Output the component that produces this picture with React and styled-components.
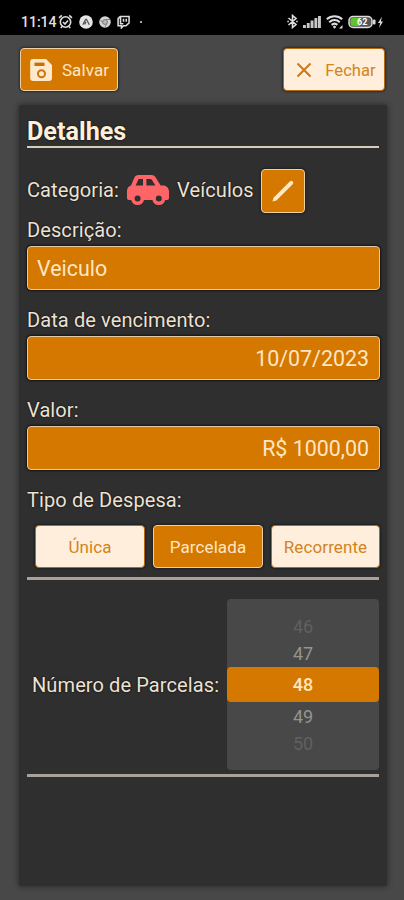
import React from "react";
import styled, { createGlobalStyle } from "styled-components";

const GlobalStyle = createGlobalStyle`
  * { box-sizing: border-box; }
  body {
    margin: 0;
    background: #484848;
    font-family: Roboto, "Liberation Sans", sans-serif;
  }
`;

const Screen = styled.div`
  display: flex;
  flex-direction: column;
  width: 404px;
  height: 900px;
  background: #484848;
  overflow: hidden;
`;

const StatusBar = styled.div`
  display: flex;
  justify-content: space-between;
  align-items: center;
  height: 35px;
  padding: 8px 20px 0 21px;
  background: #000;
  color: #e2e2e2;
`;

const StatusGroup = styled.div`
  display: flex;
  align-items: center;
  gap: ${props => props.$gap};
`;

const Clock = styled.span`
  font-size: 14px;
  font-weight: 500;
  margin-right: -5px;
`;

const Header = styled.div`
  display: flex;
  justify-content: space-between;
  padding: 13px 19px 0 20px;
  height: 70px;
`;

const Button = styled.button`
  display: flex;
  align-items: center;
  justify-content: center;
  gap: ${props => props.$gap || "0"};
  width: ${props => props.$width};
  height: ${props => props.$height || "43px"};
  padding: ${props => props.$padding || "0"};
  border: 1.5px solid ${props => (props.$light ? "#b56a0c" : "#f0cfa2")};
  border-radius: 4px;
  background: ${props => (props.$light ? "#ffeedb" : "#d47800")};
  color: ${props => (props.$light ? "#d08422" : "#ffe6c4")};
  font-family: inherit;
  font-size: ${props => props.$size || "17px"};
  letter-spacing: ${props => props.$spacing || "0.1px"};
  box-shadow: 0 0 2px 1px rgba(10, 20, 30, 0.55);
`;

const Panel = styled.div`
  flex: none;
  display: flex;
  flex-direction: column;
  width: 368px;
  height: 781px;
  margin-left: 19px;
  padding: 0 8px;
  background: #2f2f2f;
  border-radius: 3px;
  box-shadow: 0 0 5px 1px rgba(30, 30, 30, 0.6);
`;

const Title = styled.h1`
  margin: 0;
  height: 43px;
  padding-top: 12px;
  border-bottom: 2px solid #d9cbb9;
  color: #ffefd9;
  font-size: 25.2px;
  line-height: 29px;
  font-weight: 700;
  text-shadow: 0 0 2px #000;
`;

const CategoryRow = styled.div`
  display: flex;
  align-items: center;
  height: 46px;
  margin-top: 19px;
`;

const Label = styled.span`
  color: #eee2d2;
  font-size: 20px;
  line-height: 24px;
  letter-spacing: 0.1px;
  text-shadow: 0 0 2px #000;
  white-space: nowrap;
`;

const CarIcon = styled.svg`
  margin: 0 7px;
`;

const EditButton = styled(Button)`
  margin: 2px 0 0 7px;
`;

const Field = styled.label`
  display: flex;
  flex-direction: column;
  gap: 4px;
  height: 90px;
  padding-top: 5px;
`;

const Input = styled.input`
  width: 353px;
  height: 44px;
  padding: 1px 10px 0 9px;
  border: 1.5px solid #e6c8a2;
  border-radius: 4px;
  outline: none;
  background: #d47800;
  color: #ffe6c4;
  font-family: inherit;
  font-size: 21.4px;
  text-align: ${props => props.$align || "left"};
  box-shadow: 0 0 2px 1px rgba(0, 0, 0, 0.6);
`;

const TypeSection = styled.div`
  height: 97px;
  padding-top: 5px;
  border-bottom: 3px solid #aaa299;
`;

const TypeRow = styled.div`
  display: flex;
  gap: 8px;
  width: 353px;
  padding: 13px 0 0 8px;
`;

const Installments = styled.div`
  display: flex;
  align-items: center;
  justify-content: space-between;
  height: 197px;
  padding: 18px 0 3px 5px;
  border-bottom: 3px solid #aaa299;
`;

const Picker = styled.div`
  display: flex;
  flex-direction: column;
  align-items: center;
  width: 152px;
  height: 171px;
  padding-top: 14px;
  border-radius: 4px;
  background: #484848;
`;

const PickerItem = styled.div`
  height: 27px;
  line-height: 27px;
  font-size: 18px;
  color: ${props => (props.$far ? "#606060" : "#969490")};
`;

const PickerSelected = styled.div`
  width: 152px;
  height: 35px;
  margin-bottom: 1px;
  line-height: 36px;
  border-radius: 4px;
  background: #d47800;
  color: #ffe6c4;
  font-size: 18px;
  font-weight: 500;
  text-align: center;
`;

const types = [
  { name: "Única", width: "110px" },
  { name: "Parcelada", width: "110px" },
  { name: "Recorrente", width: "109px" },
];

function StatusIcons() {
  return (
    <StatusGroup $gap="6px">
      <Clock>11:14</Clock>
      <svg width="15" height="15" viewBox="0 0 15 15" fill="none" stroke="#ddd" strokeWidth="1.6">
        <circle cx="7.5" cy="8" r="5.2" />
        <path d="M1 3.8 3.8 1.3M14 3.8 11.2 1.3M5 8l2 2 3-3.5M4 12.5 2.8 14M11 12.5l1.2 1.5" />
      </svg>
      <svg width="14" height="14" viewBox="0 0 14 14">
        <circle cx="7" cy="7" r="6.8" fill="#e6e6e6" />
        <path d="M3.8 9.8 6.7 4.3c.2-.3.5-.3.7 0l2.9 5.5M7 6.8 5.6 9.4" fill="none" stroke="#555" strokeWidth="1.3" />
      </svg>
      <svg width="12" height="12" viewBox="0 0 12 12">
        <circle cx="6" cy="6" r="5.8" fill="#d4d4d4" />
        <circle cx="6" cy="6" r="2.4" fill="#bbb" stroke="#777" />
        <path d="M6 3.5h5M3.8 7.2 1.4 3.6M8 7.4 5.7 11.6" stroke="#888" />
      </svg>
      <svg width="13" height="14" viewBox="0 0 14 14" fill="none" stroke="#ddd" strokeWidth="1.7">
        <path d="M3.5 1H13v7l-3.3 3H7l-2.2 2.3V11H1.2V3.4zM3.8 1v7.8h3M7 3.5v3.3M10 3.5v3.3" />
      </svg>
      <svg width="14" height="6" viewBox="0 0 14 6">
        <circle cx="5" cy="3" r="1.1" fill="#ccc" />
      </svg>
    </StatusGroup>
  );
}

function SystemIcons() {
  return (
    <StatusGroup $gap="5px">
      <svg width="11" height="15" viewBox="0 0 11 15" fill="none" stroke="#ddd" strokeWidth="1.6">
        <path d="M1.5 4 9 10.5 5.5 13.5v-12L9 4.5 1.5 11M.3 7.5h1.6M9.2 7.5h1.6" />
      </svg>
      <svg width="18" height="13" viewBox="0 0 18 13" fill="#c8c8c8">
        <rect x="0" y="10" width="2.9" height="3" />
        <rect x="3.8" y="8" width="2.9" height="5" />
        <rect x="7.6" y="5.5" width="2.9" height="7.5" />
        <rect x="11.4" y="3" width="2.9" height="10" />
        <rect x="15" y="1" width="2.9" height="12" />
      </svg>
      <svg width="17" height="14" viewBox="0 0 17 14" fill="none" stroke="#ddd" strokeWidth="2.1">
        <path d="M.8 4.3c4.5-4 11-4 15.4 0M3.2 7.2c3.1-2.8 7.5-2.8 10.6 0M5.6 9.9c1.7-1.5 4.1-1.5 5.8 0" />
        <path d="m8.5 10.8 1.2 1.2-1.2 1.2-1.2-1.2z" fill="#ddd" strokeWidth="1" />
        <path d="M13 13.5h3.5V10z" fill="#ddd" stroke="none" />
      </svg>
      <svg width="36" height="14" viewBox="0 0 36 14">
        <rect x="1" y="1.5" width="23" height="11" rx="4" fill="#555" stroke="#ddd" strokeWidth="1.5" />
        <path d="M5 3h7v8H5a2.5 2.5 0 0 1-2.5-2.5v-3A2.5 2.5 0 0 1 5 3z" fill="#5fc52b" />
        <rect x="25" y="4.5" width="2.5" height="5" rx="1" fill="#ddd" />
        <text x="9" y="10.2" fill="#fff" fontSize="9" fontWeight="700">62</text>
        <path d="M34 1.5 30 8h2.2l-1.2 5L35 6.5h-2.2z" fill="#ddd" />
      </svg>
    </StatusGroup>
  );
}

function App() {
  return (
    <>
      <GlobalStyle />
      <Screen>
        <StatusBar>
          <StatusIcons />
          <SystemIcons />
        </StatusBar>
        <Header>
          <Button $width="98px" $gap="9px">
            <svg width="24" height="24" viewBox="0 0 24 24">
              <path d="M4.2 1H17l6 6v13a3 3 0 0 1-3 3H4.2a3 3 0 0 1-3-3V4a3 3 0 0 1 3-3z" fill="#ffe9cb" />
              <rect x="5.5" y="4.6" width="10" height="3.4" fill="#c56f05" />
              <circle cx="12.5" cy="15.7" r="3.5" fill="#ffe9cb" stroke="#c8780f" strokeWidth="2" />
            </svg>
            Salvar
          </Button>
          <Button $light $width="102px" $gap="13px" $size="16.6px" $spacing="0" $padding="1px 0 0 4px">
            <svg width="16" height="16" viewBox="0 0 16 16">
              <path d="M1.5 1.5 14.5 14.5M14.5 1.5 1.5 14.5" stroke="#c97a14" strokeWidth="2" />
            </svg>
            Fechar
          </Button>
        </Header>
        <Panel>
          <Title>Detalhes</Title>
          <CategoryRow>
            <Label>Categoria:</Label>
            <CarIcon width="44" height="32" viewBox="0 0 44 32">
              <path
                fill="#ff6467"
                fillRule="evenodd"
                d="M12.5 1h13.200c1.600 0 2.800.7 3.700 2l5.200 8.400h2.400c3.400 0 6 2.600 6 6v6.600c0 1.300-.7 2-2 2h-1.800a6.600 6.600 0 0 1-12.800 0H18a6.600 6.600 0 0 1-12.800 0H3c-1.300 0-2-.7-2-2v-7c0-2.700 1.500-4.700 4-5.400L8.300 3.700C9.100 2 10.500 1 12.500 1zM12.600 5 9.600 11.400h7.400v-6.400zM20.400 5v6.400h9l-3.600-5.600c-.4-.6-.8-.8-1.500-.8zM11.600 21.500a3 3 0 1 0 0 6 3 3 0 0 0 0-6zM32.800 21.500a3 3 0 1 0 0 6 3 3 0 0 0 0-6z"
              />
            </CarIcon>
            <Label>Veículos</Label>
            <EditButton $width="44px" $height="44px">
              <svg width="26" height="26" viewBox="0 0 26 26">
                <path d="m2.5 23.5 1-3.8L19.8 3.4a2 2 0 0 1 2.9 2.9L6.4 22.5z" fill="#ffe9cb" />
              </svg>
            </EditButton>
          </CategoryRow>
          <Field>
            <Label>Descrição:</Label>
            <Input defaultValue="Veiculo" />
          </Field>
          <Field>
            <Label>Data de vencimento:</Label>
            <Input defaultValue="10/07/2023" $align="right" />
          </Field>
          <Field>
            <Label>Valor:</Label>
            <Input defaultValue="R$ 1000,00" $align="right" />
          </Field>
          <TypeSection>
            <Label>Tipo de Despesa:</Label>
            <TypeRow>
              {types.map(type => (
                <Button key={type.name} $width={type.width} $light={type.name !== "Parcelada"}>
                  {type.name}
                </Button>
              ))}
            </TypeRow>
          </TypeSection>
          <Installments>
            <Label>Número de Parcelas:</Label>
            <Picker>
              <PickerItem $far>46</PickerItem>
              <PickerItem>47</PickerItem>
              <PickerSelected>48</PickerSelected>
              <PickerItem>49</PickerItem>
              <PickerItem $far>50</PickerItem>
            </Picker>
          </Installments>
        </Panel>
      </Screen>
    </>
  );
}

export default App;
